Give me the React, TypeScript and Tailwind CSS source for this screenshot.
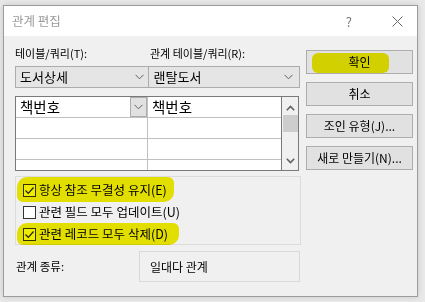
import React from "react";

const Chevron = ({ className = "" }: { className?: string }) => (
  <svg width="9" height="6" viewBox="0 0 9 6" className={className}>
    <path d="M0.5 0.8 L4.5 4.8 L8.5 0.8" fill="none" stroke="#5f5f5f" strokeWidth="1" />
  </svg>
);

const Hl = ({ className }: { className: string }) => (
  <span className={`absolute bg-[#f0ec00] mix-blend-multiply rounded-[6px] ${className}`} />
);

const Check = ({ checked }: { checked: boolean }) => (
  <span className="w-[13px] h-[13px] border border-[#333333] bg-white flex items-center justify-center shrink-0">
    {checked && (
      <svg width="11" height="11" viewBox="0 0 11 11">
        <path d="M1.5 5.5 L4.3 8.3 L9.5 2.5" fill="none" stroke="#222" strokeWidth="1.2" />
      </svg>
    )}
  </span>
);

export default function App() {
  const font = "font-['Malgun_Gothic','Noto_Sans_CJK_KR',sans-serif]";
  return (
    <div className={`w-[425px] h-[302px] bg-[#e9e9e9] pt-[5px] pl-[3px] ${font} text-black`}>
      <div className="w-[415px] h-[292px] border border-[#9c9c9c] bg-[#f0f0f0] flex flex-col shadow-[0_0_6px_rgba(0,0,0,0.15)]">
        {/* title bar */}
        <div className="h-[30px] bg-white flex items-center pl-[8px] pr-[14px] shrink-0">
          <span className="text-[12.5px] text-[#9a9a9a] leading-none">관계 편집</span>
          <span className="ml-auto text-[13px] text-[#777] leading-none mr-[40px]">?</span>
          <svg width="11" height="11" viewBox="0 0 11 11">
            <path d="M0.5 0.5 L10.5 10.5 M10.5 0.5 L0.5 10.5" stroke="#666" strokeWidth="1" />
          </svg>
        </div>
        {/* body */}
        <div className="flex pl-[11px]">
          {/* left column */}
          <div className="w-[285px] flex flex-col pt-[9px]">
            <div className="h-[16px] flex text-[11px] leading-[16px]">
              <span className="w-[135px]">테이블/쿼리(T):</span>
              <span>관계 테이블/쿼리(R):</span>
            </div>
            <div className="mt-[5px] h-[22px] flex">
              <div className="w-[134px] h-full border border-[#acacac] bg-[#e5e5e5] flex items-center pl-[4px] pr-[4px] text-[13px]">
                <span>도서상세</span>
                <Chevron className="ml-auto" />
              </div>
              <div className="w-[152px] h-full border border-[#acacac] border-l-0 bg-[#e5e5e5] flex items-center pl-[5px] pr-[6px] text-[13px]">
                <span>랜탈도서</span>
                <Chevron className="ml-auto" />
              </div>
            </div>
            {/* grid */}
            <div className="mt-[8px] w-[284px] h-[75px] border border-[#7a7a7a] bg-white flex overflow-hidden">
              <div className="w-[265px] flex flex-col">
                {[0, 1, 2, 3].map((r) => (
                  <div key={r} className="h-[21px] shrink-0 flex border-b border-[#c0c0c0]">
                    <div className="w-[132px] border-r border-[#c0c0c0] flex items-center pl-[4px] text-[14.5px] relative">
                      {r === 0 && (
                        <>
                          <span>책번호</span>
                          <span className="absolute right-0 top-0 w-[17px] h-[20px] bg-[#e1e1e1] border border-[#adadad] flex items-center justify-center">
                            <Chevron />
                          </span>
                        </>
                      )}
                    </div>
                    <div className="flex-1 flex items-center pl-[4px] text-[14.5px]">{r === 0 && "책번호"}</div>
                  </div>
                ))}
              </div>
              <div className="flex-1 border-l border-[#7a7a7a] bg-[#f0f0f0] flex flex-col items-center">
                <svg width="9" height="6" viewBox="0 0 9 6" className="mt-[8px]">
                  <path d="M0.8 5.2 L4.5 1.5 L8.2 5.2" fill="none" stroke="#606060" strokeWidth="1.6" />
                </svg>
                <div className="mt-[4px] w-[15px] h-[17px] bg-[#cdcdcd]" />
                <svg width="9" height="6" viewBox="0 0 9 6" className="mt-[26px]">
                  <path d="M0.8 0.8 L4.5 4.5 L8.2 0.8" fill="none" stroke="#606060" strokeWidth="1.6" />
                </svg>
              </div>
            </div>
            {/* checkbox group */}
            <div className="mt-[5px] w-[286px] h-[69px] border border-[#dcdcdc] flex flex-col pl-[7px] pt-[7px] gap-[9px] text-[12.5px] relative">
              <Hl className="left-[1px] top-[0px] w-[157px] h-[25px] rounded-tl-[10px] rounded-br-[10px]" />
              <Hl className="left-[1px] top-[46px] w-[162px] h-[22px] rounded-tl-[10px] rounded-br-[10px]" />
              <label className="flex items-center gap-[3px] h-[13px]">
                <Check checked />
                <span>항상 참조 무결성 유지(E)</span>
              </label>
              <label className="flex items-center gap-[3px] h-[13px]">
                <Check checked={false} />
                <span>관련 필드 모두 업데이트(U)</span>
              </label>
              <label className="flex items-center gap-[3px] h-[13px]">
                <Check checked />
                <span>관련 레코드 모두 삭제(D)</span>
              </label>
            </div>
            {/* relation type */}
            <div className="mt-[6px] flex items-center h-[31px] text-[12px]">
              <span className="w-[124px] pl-[1px] text-[11.5px]">관계 종류:</span>
              <div className="w-[161px] h-full border border-[#d9d9d9] flex items-center pl-[10px]">일대다 관계</div>
            </div>
          </div>
          {/* right buttons */}
          <div className="ml-[6px] w-[107px] flex flex-col gap-[8px] pt-[14px] text-[12px]">
            <div className="h-[24px] border border-[#adadad] bg-[#e1e1e1] flex items-center justify-center relative">
              <Hl className="left-[5px] top-[2px] w-[77px] h-[20px] rounded-[3px]" />
              <span className="relative">확인</span>
            </div>
            <div className="h-[24px] border border-[#adadad] bg-[#e1e1e1] flex items-center justify-center">취소</div>
            <div className="h-[24px] border border-[#adadad] bg-[#e1e1e1] flex items-center justify-center">조인 유형(J)...</div>
            <div className="h-[24px] border border-[#adadad] bg-[#e1e1e1] flex items-center justify-center">새로 만들기(N)...</div>
          </div>
        </div>
      </div>
    </div>
  );
}
